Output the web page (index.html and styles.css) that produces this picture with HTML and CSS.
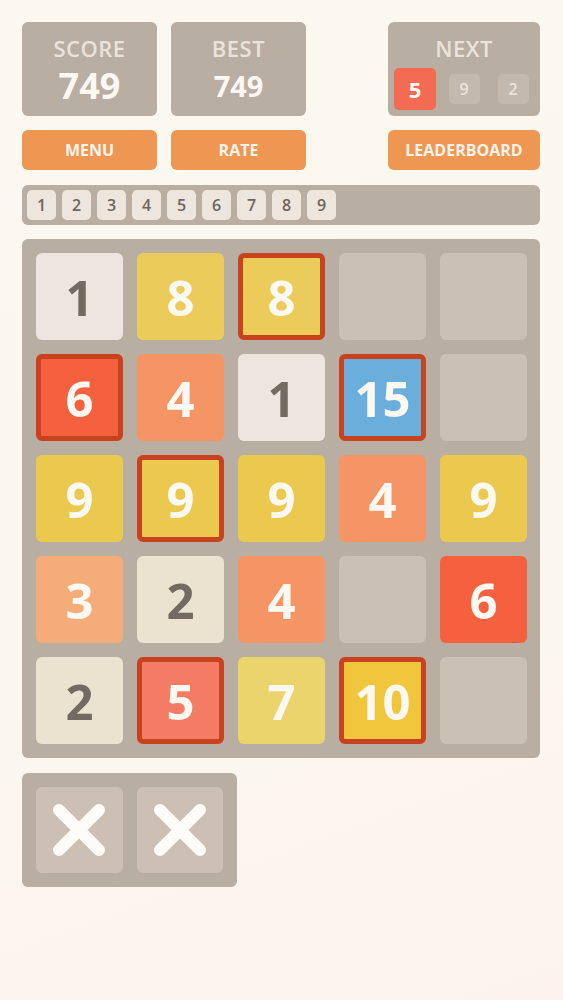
FILE: index.html
```html
<!DOCTYPE html>
<html>
<head>
<meta charset="utf-8">
<link rel="stylesheet" href="styles.css">
</head>
<body>
<div class="page">
  <div class="top-row">
    <div class="stat">
      <div class="stat-label">SCORE</div>
      <div class="stat-value big">749</div>
    </div>
    <div class="stat">
      <div class="stat-label">BEST</div>
      <div class="stat-value">749</div>
    </div>
    <div class="stat next">
      <div class="stat-label">NEXT</div>
      <div class="next-row">
        <div class="slot"><div class="next-tile main">5</div></div>
        <div class="slot"><div class="next-tile">9</div></div>
        <div class="slot"><div class="next-tile">2</div></div>
      </div>
    </div>
  </div>
  <div class="btn-row">
    <div class="btn">MENU</div>
    <div class="btn">RATE</div>
    <div class="btn wide">LEADERBOARD</div>
  </div>
  <div class="numbar">
    <div class="num">1</div><div class="num">2</div><div class="num">3</div>
    <div class="num">4</div><div class="num">5</div><div class="num">6</div>
    <div class="num">7</div><div class="num">8</div><div class="num">9</div>
  </div>
  <div class="board">
    <div class="tile t1">1</div>
    <div class="tile t8">8</div>
    <div class="tile t8 sel">8</div>
    <div class="tile empty"></div>
    <div class="tile empty"></div>

    <div class="tile t6 sel">6</div>
    <div class="tile t4">4</div>
    <div class="tile t1">1</div>
    <div class="tile t15 sel">15</div>
    <div class="tile empty"></div>

    <div class="tile t9">9</div>
    <div class="tile t9 sel">9</div>
    <div class="tile t9">9</div>
    <div class="tile t4">4</div>
    <div class="tile t9">9</div>

    <div class="tile t3">3</div>
    <div class="tile t2">2</div>
    <div class="tile t4">4</div>
    <div class="tile empty"></div>
    <div class="tile t6">6</div>

    <div class="tile t2">2</div>
    <div class="tile t5 sel">5</div>
    <div class="tile t7">7</div>
    <div class="tile t10 sel">10</div>
    <div class="tile empty"></div>
  </div>
  <div class="tools">
    <div class="tool">
      <svg width="54" height="54" viewBox="0 0 54 54"><path d="M7 7 L47 47 M47 7 L7 47" stroke="#fefcf8" stroke-width="12" stroke-linecap="round" fill="none"/></svg>
    </div>
    <div class="tool">
      <svg width="54" height="54" viewBox="0 0 54 54"><path d="M7 7 L47 47 M47 7 L7 47" stroke="#fefcf8" stroke-width="12" stroke-linecap="round" fill="none"/></svg>
    </div>
  </div>
</div>
</body>
</html>
```

FILE: styles.css
```css
html, body {
  margin: 0;
  padding: 0;
}
body {
  background: linear-gradient(160deg, #faf8ef 0%, #faf7ee 60%, #fdf3ec 100%);
  min-height: 1000px;
  font-family: "Open Sans", "DejaVu Sans", sans-serif;
}
.page {
  padding: 22px;
  width: 518px;
  display: flex;
  flex-direction: column;
}
.top-row {
  display: flex;
  gap: 14px;
  height: 94px;
}
.stat {
  width: 135px;
  background: #b9aea2;
  border-radius: 6px;
  display: flex;
  flex-direction: column;
  align-items: center;
  padding-top: 14px;
  box-sizing: border-box;
}
.stat.next {
  width: 152px;
  margin-left: auto;
}
.stat-label {
  font-size: 22px;
  line-height: 24px;
  font-weight: 600;
  letter-spacing: 0.5px;
  color: #ebe3d9;
}
.stat-value {
  margin-top: 6px;
  font-size: 29px;
  line-height: 40px;
  font-weight: 700;
  color: #fbf8f2;
}
.stat-value.big {
  font-size: 36px;
}
.next-row {
  display: flex;
  justify-content: center;
  margin-top: 8px;
}
.slot {
  width: 49px;
  height: 42px;
  display: flex;
  align-items: center;
  justify-content: center;
}
.next-tile {
  width: 31px;
  height: 30px;
  border-radius: 5px;
  background: #c4b9ad;
  color: #ebe4db;
  font-size: 16px;
  font-weight: 600;
  display: flex;
  align-items: center;
  justify-content: center;
}
.next-tile.main {
  width: 42px;
  height: 42px;
  background: #f26b52;
  color: #fdf7f2;
  font-size: 22px;
  font-weight: 700;
}
.btn-row {
  display: flex;
  gap: 14px;
  margin-top: 14px;
  height: 40px;
}
.btn {
  width: 135px;
  background: #ee9752;
  border-radius: 6px;
  color: #fcf3ea;
  font-size: 16px;
  font-weight: 700;
  display: flex;
  align-items: center;
  justify-content: center;
}
.btn.wide {
  width: 152px;
  margin-left: auto;
}
.numbar {
  margin-top: 15px;
  height: 40px;
  background: #b9aea2;
  border-radius: 6px;
  display: flex;
  align-items: center;
  gap: 6px;
  padding: 0 5px;
}
.num {
  width: 29px;
  height: 30px;
  border-radius: 5px;
  background: #ece6dc;
  color: #6d655e;
  font-size: 16px;
  font-weight: 600;
  display: flex;
  align-items: center;
  justify-content: center;
}
.board {
  margin-top: 14px;
  background: #b9aea2;
  border-radius: 6px;
  padding: 14px;
  display: grid;
  grid-template-columns: repeat(5, 87px);
  grid-auto-rows: 87px;
  gap: 14px;
}
.tile {
  border-radius: 6px;
  box-sizing: border-box;
  display: flex;
  align-items: center;
  justify-content: center;
  font-size: 49px;
  font-weight: 700;
  color: #fcf9f3;
}
.tile.sel {
  border: 5px solid #c8421f;
}
.empty { background: #cbc0b4; }
.t1 { background: #ede5de; color: #736a62; }
.t2 { background: #ece2d0; color: #736a62; }
.t3 { background: #f4ad78; }
.t4 { background: #f59566; }
.t5 { background: #f47c64; }
.t6 { background: #f5603e; }
.t7 { background: #ecd46c; }
.t8 { background: #ebcc5b; }
.t9 { background: #ebc94e; }
.t10 { background: #efc63c; }
.t15 { background: #6aaedb; }
.tools {
  margin-top: 15px;
  width: 215px;
  height: 114px;
  box-sizing: border-box;
  background: #b9aea2;
  border-radius: 6px;
  padding: 14px;
  display: flex;
  gap: 14px;
}
.tool {
  width: 87px;
  height: 86px;
  border-radius: 6px;
  background: #cbc0b3;
  display: flex;
  align-items: center;
  justify-content: center;
}
```
